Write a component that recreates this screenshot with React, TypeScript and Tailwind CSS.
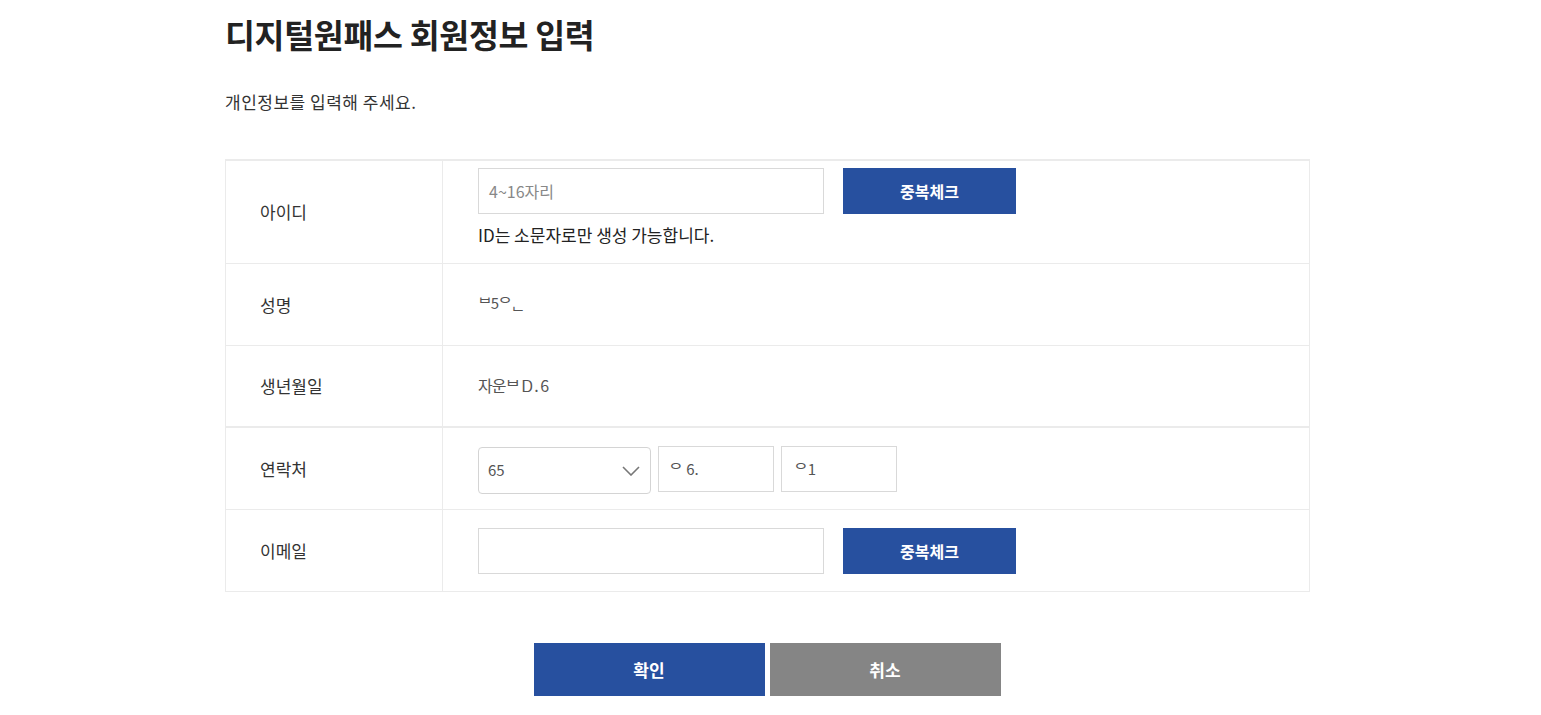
import React from "react";

const font = { fontFamily: '"Noto Sans CJK KR", "Noto Sans", sans-serif' };

function Row({ label, children, h, className = "", top = false }: { label: string; children: React.ReactNode; h: string; className?: string; top?: boolean }) {
  return (
    <div className={`flex border-b border-[#ebebeb] ${h} ${className}`}>
      <div className="w-[217px] shrink-0 border-r border-[#ebebeb] flex items-center pl-[34px] text-[17px] text-[#333]">
        {label}
      </div>
      <div className={`flex-1 flex flex-col ${top ? "justify-start" : "justify-center"} pl-[35px]`}>{children}</div>
    </div>
  );
}

export default function App() {
  return (
    <div className="w-[1541px] h-[715px] bg-white overflow-hidden" style={font}>
      <div className="ml-[225px] w-[1085px] pt-[10px]">
        <h1 className="text-[32.5px] font-bold text-[#222] leading-[48px] tracking-[-0.3px]">디지털원패스 회원정보 입력</h1>
        <p className="mt-[32px] text-[17px] text-[#333] leading-[24px] tracking-[0.5px]">개인정보를 입력해 주세요.</p>

        <div className="mt-[45px] border-t-2 border-l border-r border-[#ebebeb]">
          <Row label="아이디" h="h-[103px]" top>
            <div className="flex flex-col pt-[7px]">
              <div className="flex items-center">
                <div className="w-[346px] h-[46px] border border-[#d9d9d9] flex items-center pl-[10px] text-[16px] text-[#888]">4~16자리</div>
                <button className="ml-[19px] w-[173px] h-[46px] bg-[#27509f] text-white text-[16px] font-bold">중복체크</button>
              </div>
              <p className="mt-[9px] text-[17px] text-[#222] leading-[24px]">ID는 소문자로만 생성 가능합니다.</p>
            </div>
          </Row>
          <Row label="성명" h="h-[82px]">
            <span className="text-[15px] text-[#555] tracking-[-1px] leading-[20px] -mt-[4px]">ᄇ5ᄋᆫ</span>
          </Row>
          <Row label="생년월일" h="h-[82px]" className="border-b-2">
            <span className="text-[16px] text-[#555] tracking-[-1px] leading-[20px] -mt-[2px]">자운ᄇ Ꭰ . 6</span>
          </Row>
          <Row label="연락처" h="h-[82px]">
            <div className="flex items-center gap-[7px] mt-[1px]">
              <div className="w-[173px] h-[47px] border border-[#d4d4d4] rounded-[4px] flex items-center justify-between pl-[9px] pr-[10px] mt-[3px]">
                <span className="text-[15px] text-[#555]">65</span>
                <svg width="18" height="10" viewBox="0 0 18 10" fill="none">
                  <path d="M1 1l8 8 8-8" stroke="#777" strokeWidth="1.6" />
                </svg>
              </div>
              <div className="w-[116px] h-[46px] border border-[#d9d9d9] flex items-center pl-[10px] text-[15px] text-[#555]">ᄋ 6.</div>
              <div className="w-[116px] h-[46px] border border-[#d9d9d9] flex items-center pl-[12px] text-[15px] text-[#555]">ᄋ1</div>
            </div>
          </Row>
          <Row label="이메일" h="h-[82px]">
            <div className="flex items-center">
              <div className="w-[346px] h-[46px] border border-[#d9d9d9]"></div>
              <button className="ml-[19px] w-[173px] h-[46px] bg-[#27509f] text-white text-[16px] font-bold">중복체크</button>
            </div>
          </Row>
        </div>

        <div className="mt-[51px] flex justify-center gap-[5px] pr-[1px]">
          <button className="w-[231px] h-[53px] bg-[#27509f] text-white text-[17px] font-bold">확인</button>
          <button className="w-[231px] h-[53px] bg-[#858585] text-white text-[17px] font-bold">취소</button>
        </div>
      </div>
    </div>
  );
}
